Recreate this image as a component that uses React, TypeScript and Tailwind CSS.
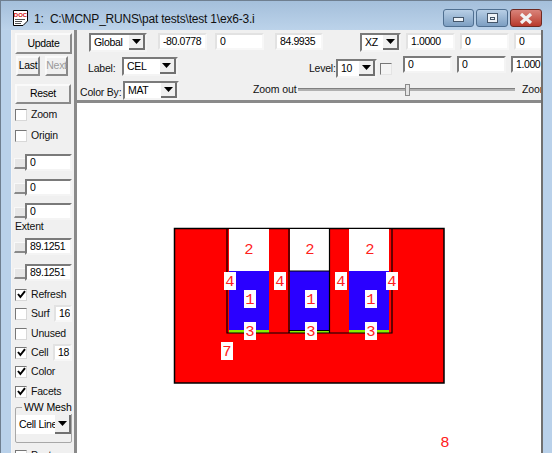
const FONT = "font-['Liberation_Sans',Arial,sans-serif]";

function Arrow() {
  return (
    <svg width="9" height="5" viewBox="0 0 9 5">
      <polygon points="0,0 9,0 4.5,5" fill="#000" />
    </svg>
  );
}

function Combo({ label, w, ml = 'ml-0', mt = 'mt-0' }: { label: string; w: string; ml?: string; mt?: string }) {
  return (
    <div className={`${w} ${ml} ${mt} h-[19px] shrink-0 flex bg-white border-2 border-t-[#7a7a7a] border-l-[#7a7a7a] border-r-[#f4f4f4] border-b-[#f4f4f4]`}>
      <span className="flex-1 pl-[3px] text-[10.5px] tracking-[-0.3px] leading-[14px] overflow-hidden whitespace-nowrap">{label}</span>
      <span className="w-[16px] h-full shrink-0 flex items-center justify-center bg-[#f0f0f0] border-r-2 border-b-2 border-r-[#707070] border-b-[#707070]">
        <Arrow />
      </span>
    </div>
  );
}

function Field({ value, w, ml = 'ml-0', mt = 'mt-0', raised = true, clip }: { value: string; w: string; ml?: string; mt?: string; raised?: boolean; clip?: boolean }) {
  return (
    <div
      className={`${w} ${ml} ${mt} h-[17px] shrink-0 bg-white pl-[3px] text-[10.5px] tracking-[-0.4px] leading-[13px] whitespace-nowrap overflow-hidden border-2 ${
        raised
          ? 'border-[#f7f7f7] border-l-[#e2e2e2] border-t-[#e2e2e2]'
          : 'border-t-[#7a7a7a] border-l-[#7a7a7a] border-r-[#f4f4f4] border-b-[#f4f4f4]'
      } ${clip ? 'border-r-0' : ''}`}
    >
      {value}
    </div>
  );
}

function Btn({ label, w, h, ml = 'ml-0', mt = 'mt-0', off }: { label: string; w: string; h: string; ml?: string; mt?: string; off?: boolean }) {
  return (
    <div
      className={`${w} ${h} ${ml} ${mt} shrink-0 flex items-center justify-center text-[10.5px] tracking-[-0.3px] bg-[#f0f0f0] border-2 border-t-[#fafafa] border-l-[#fafafa] border-r-[#8a8a8a] border-b-[#8a8a8a] ${
        off ? 'text-[#9a9a9a]' : 'text-black'
      }`}
    >
      {label}
    </div>
  );
}

function Box({ on }: { on?: boolean }) {
  return (
    <span className="w-[12px] h-[12px] shrink-0 bg-white border border-t-[#777] border-l-[#777] border-r-[#d8d8d8] border-b-[#d8d8d8] flex items-center justify-center">
      {on && (
        <svg width="9" height="9" viewBox="0 0 9 9">
          <path d="M1 4 L3.4 7 L8 1.2" fill="none" stroke="#000" strokeWidth="2" />
        </svg>
      )}
    </span>
  );
}

function Check({ label, on, mt = 'mt-0' }: { label: string; on?: boolean; mt?: string }) {
  return (
    <div className={`flex items-center h-[13px] ${mt}`}>
      <Box on={on} />
      <span className="ml-[4px] text-[10.5px] tracking-[-0.2px] text-[#111] whitespace-nowrap">{label}</span>
    </div>
  );
}

function SpinField({ value, mt = 'mt-0' }: { value: string; mt?: string }) {
  return (
    <div className={`flex items-end ${mt}`}>
      <span className="w-[11px] h-[11px] mb-[2px] shrink-0 bg-[#e6e6e6] border border-b-2 border-r-0 border-[#f8f8f8] border-b-[#8a8a8a]" />
      <Field value={value} w="w-[47px]" raised={false} />
    </div>
  );
}

const LABELS = [
  { t: '2', x: 249, y: 249, box: false },
  { t: '2', x: 310, y: 249, box: false },
  { t: '2', x: 370, y: 249, box: false },
  { t: '4', x: 230, y: 281, box: true },
  { t: '4', x: 280, y: 281, box: true },
  { t: '4', x: 341, y: 281, box: true },
  { t: '4', x: 392, y: 281, box: true },
  { t: '1', x: 250, y: 299, box: true },
  { t: '1', x: 311, y: 299, box: true },
  { t: '1', x: 371, y: 299, box: true },
  { t: '3', x: 250, y: 331, box: true },
  { t: '3', x: 311, y: 331, box: true },
  { t: '3', x: 371, y: 331, box: true },
  { t: '7', x: 227, y: 351, box: true },
  { t: '8', x: 445, y: 442, box: false },
];

const CELLS = [
  { x: 229, w: 40 },
  { x: 290, w: 39 },
  { x: 349, w: 40 },
];

// geometry plot, drawn in page coordinates (viewBox starts at the canvas origin)
function Plot() {
  return (
    <svg width="465" height="350" viewBox="77 103 465 350" className="block">
      <rect x="174.5" y="228.5" width="269.5" height="154.5" fill="#ff0000" stroke="#000" strokeWidth="1.5" />
      {CELLS.map((c) => (
        <g key={c.x}>
          <rect x={c.x} y="229" width={c.w} height="42" fill="#fff" />
          <rect x={c.x} y="271" width={c.w} height="59" fill="#2a00ff" />
          <rect x={c.x} y="330" width={c.w} height="3" fill="#88ee00" />
        </g>
      ))}
      <path d="M227 229 V333 H392 V229 M289 229 V333 M329.5 229 V333 M289 271 H329 M289 330.5 H329" fill="none" stroke="#000" strokeWidth="1.2" />
      {LABELS.map((l, i) => (
        <g key={i}>
          {l.box && <rect x={l.x - 6} y={l.y - 9} width="12" height="18" fill="#fff" />}
          <text x={l.x} y={l.y + 5} textAnchor="middle" fontSize="15.5" fill="#ff2020" fontFamily="'Liberation Mono', monospace">
            {l.t}
          </text>
        </g>
      ))}
    </svg>
  );
}

export default function App() {
  return (
    <div className={`${FONT} w-[552px] h-[453px] overflow-hidden bg-[#b9d1ea] text-black border-l border-[#6f7f90]`}>
      {/* Title bar */}
      <div className="h-[30px] pl-[12px] flex items-start bg-gradient-to-b from-[#a4bfdb] to-[#bcd3ea] border-t border-[#6f7f90]">
        <svg width="16" height="16" viewBox="0 0 16 16" className="mt-[9px] shrink-0">
          <path d="M0.5 0.5 H14.5 V11 L10 15.5 H0.5 Z" fill="#fff" stroke="#000" />
          <text x="7.5" y="7" textAnchor="middle" fontSize="6" fontWeight="700" fill="#d01010" fontFamily="'Liberation Sans', sans-serif">DOC</text>
          <path d="M2 9.5 H12 M2 11.5 H9 M2 13.5 H8" stroke="#555" />
        </svg>
        <span className="ml-[5px] mt-[9px] text-[12px] tracking-[-0.2px] leading-[18px] text-[#111] whitespace-pre">1:  C:\MCNP_RUNS\pat tests\test 1\ex6-3.i</span>
        <div className="ml-auto mr-[10px] mt-[8px] flex gap-[2px]">
          <div className="w-[31px] h-[18px] rounded-[3px] border border-[#4f6f90] bg-gradient-to-b from-[#b8cfe6] to-[#7d9fc2] flex items-center justify-center">
            <span className="w-[11px] h-[5px] mt-[3px] bg-[#eef3f8] border border-[#44566a]" />
          </div>
          <div className="w-[32px] h-[18px] rounded-[3px] border border-[#4f6f90] bg-gradient-to-b from-[#b8cfe6] to-[#7d9fc2] flex items-center justify-center">
            <span className="w-[11px] h-[10px] bg-[#eef3f8] border border-[#44566a] flex items-center justify-center">
              <span className="w-[5px] h-[3px] border border-[#44566a]" />
            </span>
          </div>
          <div className="w-[32px] h-[18px] rounded-[3px] border border-[#6e2a22] bg-gradient-to-b from-[#d9837a] to-[#b8392c] flex items-center justify-center">
            <svg width="16" height="11" viewBox="0 0 16 11">
              <path d="M3 1 L13 10 M13 1 L3 10" stroke="#f2f2f2" strokeWidth="3.2" />
            </svg>
          </div>
        </div>
      </div>

      {/* Window body */}
      <div className="ml-[10px] mr-[9px] h-[423px] flex bg-[#f0f0f0] border-l border-[#f5f5f5] border-r-2 border-r-[#707070]">
        {/* Left control strip */}
        <div className="w-[61px] shrink-0 pt-[3px] pl-[2px] flex flex-col">
          <Btn label="Update" w="w-[57px]" h="h-[21px]" ml="ml-px" />
          <div className="flex mt-[2px] ml-[2px]">
            <Btn label="Last" w="w-[24px]" h="h-[20px]" />
            <Btn label="Next" w="w-[23px]" h="h-[20px]" ml="ml-[5px]" off />
          </div>
          <Btn label="Reset" w="w-[56px]" h="h-[20px]" mt="mt-[8px]" ml="ml-px" />
          <div className="pl-px">
            <Check label="Zoom" mt="mt-[4px]" />
            <Check label="Origin" mt="mt-[8px]" />
          </div>
          <div>
            <SpinField value="0" mt="mt-[12px]" />
            <SpinField value="0" mt="mt-[8px]" />
            <SpinField value="0" mt="mt-[7px]" />
            <div className="text-[10.5px] tracking-[-0.2px] leading-[13px] mb-[5px] pl-px text-[#111]">Extent</div>
            <SpinField value="89.1251" />
            <SpinField value="89.1251" mt="mt-[9px]" />
          </div>
          <div className="pl-px">
            <Check label="Refresh" mt="mt-[7px]" on />
            <div className="flex items-center h-[17px] mt-[4px]">
              <Box />
              <span className="w-[27px] pl-[4px] text-[10.5px] tracking-[-0.2px] text-[#111]">Surf</span>
              <Field value="16" w="w-[18px]" />
            </div>
            <Check label="Unused" mt="mt-[5px]" />
            <div className="flex items-center h-[17px] mt-[4px]">
              <Box on />
              <span className="w-[26px] pl-[4px] text-[10.5px] tracking-[-0.2px] text-[#111]">Cell</span>
              <Field value="18" w="w-[19px]" />
            </div>
            <Check label="Color" mt="mt-[4px]" on />
            <Check label="Facets" mt="mt-[7px]" on />
          </div>
          {/* WW Mesh group */}
          <div className="relative shrink-0 w-[57px] h-[36px] ml-[1px] mt-[9px] border border-[#a8a8a8] rounded-[2px]">
            <span className="absolute left-[6px] -top-[7px] px-[2px] bg-[#f0f0f0] text-[10.5px] tracking-[-0.1px] leading-[13px] whitespace-nowrap">WW Mesh</span>
            <div className="flex mt-[7px] h-[19px]">
              <span className="w-[39px] bg-white pl-[3px] text-[10.5px] tracking-[-0.3px] leading-[18px] whitespace-nowrap overflow-hidden">Cell Line</span>
              <span className="w-[16px] flex items-center justify-center bg-[#f0f0f0] border-r-2 border-b-2 border-[#707070]">
                <Arrow />
              </span>
            </div>
          </div>
          <div className="pl-px shrink-0">
            <Check label="Post" mt="mt-[6px]" />
          </div>
        </div>

        {/* Main column */}
        <div className="flex-1 min-w-0 flex flex-col border-l-[3px] border-l-[#8a8a8a] ml-px">
          {/* Top toolbar */}
          <div className="h-[73px] shrink-0 overflow-hidden bg-[#f0f0f0] border-b-[3px] border-b-[#8a8a8a]">
            <div className="h-[24px] pt-[3px] flex items-start">
              <Combo label="Global" w="w-[58px]" ml="ml-[12px]" />
              <Field value="-80.0778" w="w-[49px]" ml="ml-[11px]" />
              <Field value="0" w="w-[49px]" ml="ml-[8px]" />
              <Field value="84.9935" w="w-[48px]" ml="ml-[11px]" />
              <Combo label="XZ" w="w-[41px]" ml="ml-[37px]" />
              <Field value="1.0000" w="w-[49px]" ml="ml-[5px]" />
              <Field value="0" w="w-[49px]" ml="ml-[5px]" />
              <Field value="0" w="w-[30px]" ml="ml-[5px]" clip />
            </div>
            <div className="h-[24px] flex items-start">
              <span className="ml-[11px] mt-[8px] w-[35px] text-[10.5px] tracking-[-0.2px] leading-[13px] text-[#111]">Label:</span>
              <Combo label="CEL" w="w-[56px]" mt="mt-[3px]" />
              <span className="ml-[131px] mt-[8px] w-[28px] text-[10.5px] tracking-[-0.2px] leading-[13px] text-[#111] whitespace-nowrap">Level:</span>
              <Combo label="10" w="w-[41px]" mt="mt-[5px]" />
              <span className="ml-[3px] mt-[9px] w-[12px] h-[12px] shrink-0 bg-[#f4f4f4] border border-[#777] border-r-[#e4e4e4] border-b-[#e4e4e4]" />
              <Field value="0" w="w-[49px]" ml="ml-[11px]" mt="mt-[2px]" raised={false} />
              <Field value="0" w="w-[49px]" ml="ml-[5px]" mt="mt-[2px]" raised={false} />
              <Field value="1.000" w="w-[30px]" ml="ml-[5px]" mt="mt-[2px]" raised={false} clip />
            </div>
            <div className="h-[22px] flex items-start">
              <span className="ml-[3px] mt-[8px] w-[43px] text-[10.5px] tracking-[-0.2px] leading-[13px] whitespace-nowrap text-[#111]">Color By:</span>
              <Combo label="MAT" w="w-[56px]" mt="mt-[3px]" />
              <span className="ml-[74px] mt-[5px] w-[45px] shrink-0 text-[10.5px] tracking-[-0.1px] leading-[13px] whitespace-nowrap text-[#111]">Zoom out</span>
              <div className="relative mt-[10px] w-[217px] h-[3px] shrink-0 bg-[#b0b0b0] border-t border-[#808080]">
                <span className="absolute left-[107px] -top-[5px] w-[5px] h-[12px] bg-[#e4e4e4] border border-[#8a8a8a]" />
              </div>
              <span className="ml-[7px] mt-[5px] w-[19px] overflow-hidden text-[10.5px] tracking-[-0.1px] leading-[13px] whitespace-nowrap text-[#111]">Zoom</span>
            </div>
          </div>
          {/* Plot area */}
          <div className="flex-1 min-h-0 overflow-hidden bg-white">
            <Plot />
          </div>
        </div>
      </div>
    </div>
  );
}
